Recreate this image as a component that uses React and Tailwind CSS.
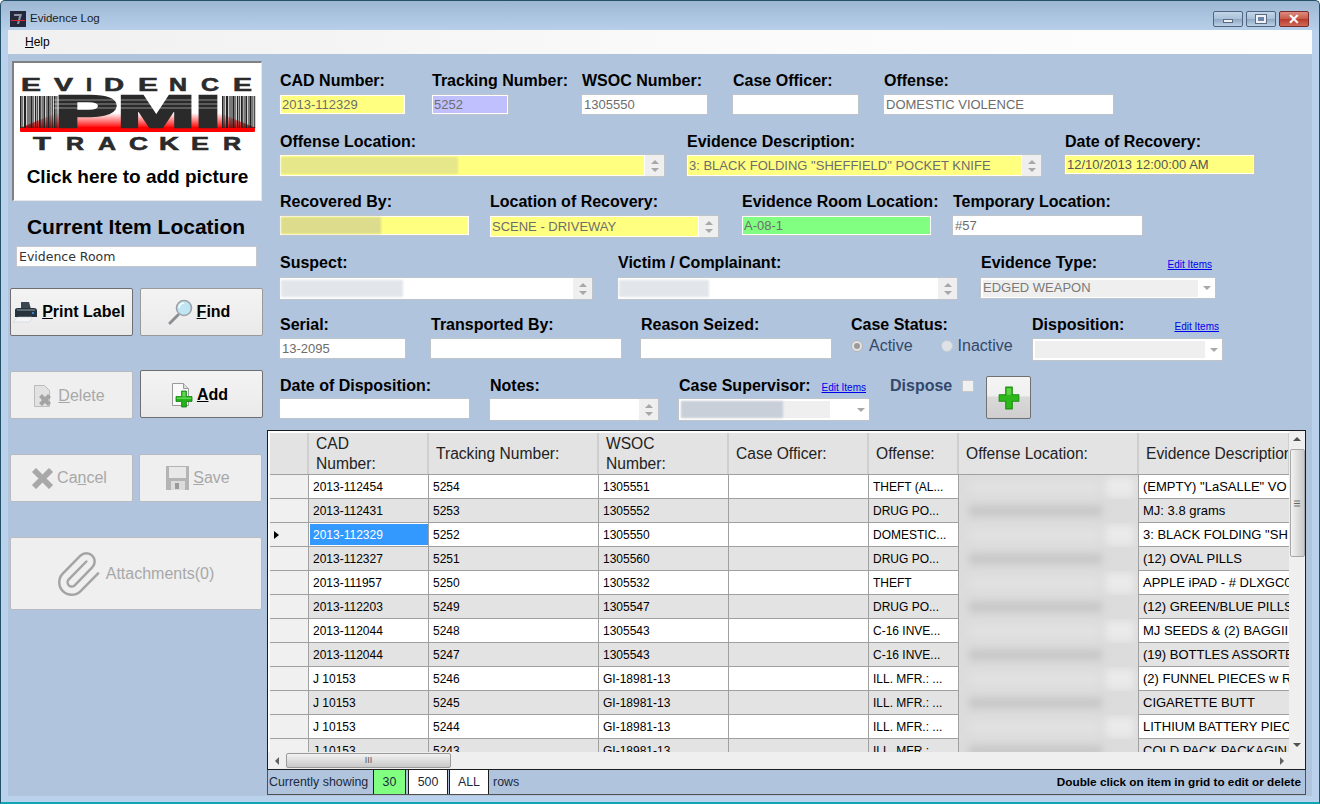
import { Paperclip } from "lucide-react";

const SANS = "font-['Liberation_Sans',Arial,sans-serif]";

const rows = [
  ["2013-112454", "5254", "1305551", "THEFT (AL...", '(EMPTY) "LaSALLE" VO'],
  ["2013-112431", "5253", "1305552", "DRUG PO...", "MJ: 3.8 grams"],
  ["2013-112329", "5252", "1305550", "DOMESTIC...", '3: BLACK FOLDING "SH'],
  ["2013-112327", "5251", "1305560", "DRUG PO...", "(12) OVAL PILLS"],
  ["2013-111957", "5250", "1305532", "THEFT", "APPLE iPAD - # DLXGC0"],
  ["2013-112203", "5249", "1305547", "DRUG PO...", "(12) GREEN/BLUE PILLS"],
  ["2013-112044", "5248", "1305543", "C-16 INVE...", "MJ SEEDS & (2) BAGGII"],
  ["2013-112044", "5247", "1305543", "C-16 INVE...", "(19) BOTTLES ASSORTE"],
  ["J 10153", "5246", "GI-18981-13", "ILL. MFR.: ...", "(2) FUNNEL PIECES w R"],
  ["J 10153", "5245", "GI-18981-13", "ILL. MFR.: ...", "CIGARETTE BUTT"],
  ["J 10153", "5244", "GI-18981-13", "ILL. MFR.: ...", "LITHIUM BATTERY PIEC"],
  ["J 10153", "5243", "GI-18981-13", "ILL. MFR.: ...", "COLD PACK PACKAGIN"],
];

const GRID = "grid grid-cols-[39px_120px_170px_130px_140px_90px_180px_151px]";

function Label({ children, className = "" }) {
  return <div className={`h-[14px] pl-[1px] text-[16px] leading-[14px] font-bold text-black whitespace-nowrap ${className}`}>{children}</div>;
}

function Spinner() {
  return (
    <div className="flex w-[20px] flex-col items-center justify-center gap-[4px] bg-[#efefef] border-l border-white h-full shrink-0">
      <span className="h-0 w-0 border-x-[4px] border-b-[4px] border-x-transparent border-b-[#a8a8a8]" />
      <span className="h-0 w-0 border-x-[4px] border-t-[4px] border-x-transparent border-t-[#a8a8a8]" />
    </div>
  );
}

function Caret() {
  return (
    <div className="flex w-[17px] h-full items-center justify-center shrink-0">
      <span className="h-0 w-0 border-x-[4px] border-t-[4px] border-x-transparent border-t-[#a8a8a8]" />
    </div>
  );
}

function Box({ width, height = "h-[21px]", bg = "bg-white", children, className = "" }) {
  return (
    <div className={`${width} ${height} ${bg} ${className} flex items-center border border-[#bfc4ca] shadow-[inset_0_0_0_1px_#fff] text-[13px] text-[#6d6d6d] whitespace-nowrap overflow-hidden`}>
      {children}
    </div>
  );
}

function Blur({ width, color = "bg-[#e2e5ea]" }) {
  return <div className={`${width} ${color} h-[17px] ml-[1px] blur-[1px]`} />;
}

function Field({ width, label, extra, gap = "mb-[6px]", children }) {
  return (
    <div className={`${width} shrink-0`}>
      <div className={`flex items-baseline justify-between h-[14px] ${gap}`}>
        <Label>{label}</Label>
        {extra}
      </div>
      {children}
    </div>
  );
}

function EditItems({ className = "" }) {
  return <a className={`text-[10px] leading-[14px] text-[#0000ee] underline whitespace-nowrap ${className}`}>Edit Items</a>;
}

function Btn({ width, height = "h-[48px]", enabled, pad = "pr-[5px]", children, className = "" }) {
  const look = enabled
    ? "border-[#6f6f6f] bg-[linear-gradient(#f3f3f3_0%,#efefef_50%,#e9e9e9_100%)] text-black font-bold"
    : "border-[#b8bcc0] bg-[#efefef] text-[#a8a8a8]";
  return (
    <div className={`${width} ${height} ${look} ${pad} ${className} flex items-center justify-center gap-[3px] rounded-[2px] border text-[16px] shrink-0`}>
      {children}
    </div>
  );
}

function PrinterIcon() {
  return (
    <svg width="26" height="26" viewBox="0 0 26 26">
      <path d="M8 3h8l2 7H8z" fill="#3c4650" />
      <path d="M2 11q0-2 3-2h16q3 0 3 3v6H2z" fill="#28323c" />
      <path d="M4 10h18v2H4z" fill="#5a6874" />
      <circle cx="20" cy="14" r="1" fill="#3aa0ff" />
      <path d="M5 18h14l-2 5H0z" fill="#f2f4f6" stroke="#c4c8cc" strokeWidth="0.5" />
    </svg>
  );
}

function MagnifierIcon() {
  return (
    <svg width="26" height="26" viewBox="0 0 26 26">
      <path d="M2 24l8-8" stroke="#8b8f94" strokeWidth="3" strokeLinecap="round" />
      <circle cx="16" cy="9" r="7.5" fill="#bfe6f2" stroke="#9ca3a8" strokeWidth="1.6" />
      <path d="M11 9a5 5 0 0 1 5-5" stroke="#fff" strokeWidth="1.6" fill="none" />
    </svg>
  );
}

function PlusShape({ x = 0, y = 0, scale = 1 }) {
  return (
    <g transform={`translate(${x} ${y}) scale(${scale})`}>
      <path d="M7 0h6v7h7v6h-7v7H7v-7H0V7h7z" fill="#24b41a" stroke="#0f7a0c" strokeWidth="1" strokeLinejoin="round" />
      <path d="M8 1h4v6H8zM1 8h18v2H1z" fill="#7be66e" opacity="0.7" />
    </g>
  );
}

function AddIcon() {
  return (
    <svg width="24" height="26" viewBox="0 0 24 26">
      <path d="M2.500 1.500h11l5 5v17h-16z" fill="#fafafa" stroke="#9a9a9a" />
      <path d="M13.500 1.500v5h5" fill="#dcdcdc" stroke="#9a9a9a" />
      <PlusShape x={6} y={9} scale={0.8} />
    </svg>
  );
}

function DeleteIcon() {
  return (
    <svg width="22" height="26" viewBox="0 0 22 26">
      <path d="M1.500 2.500h10l5 5v16h-15z" fill="#e2e2e2" stroke="#bcbcbc" />
      <path d="M6 14l3-3 3 3 3-3 3 3-3 3 3 3-3 3-3-3-3 3-3-3 3-3z" fill="#a4a4a4" />
    </svg>
  );
}

function CancelIcon() {
  return (
    <svg width="23" height="23" viewBox="0 0 23 23">
      <path d="M1 5l4-4 6.500 6.500L18 1l4 4-6.500 6.500L22 18l-4 4-6.500-6.500L5 22l-4-4 6.500-6.500z" fill="#a8a8a8" stroke="#c4c4c4" strokeWidth="0.6" />
    </svg>
  );
}

function SaveIcon() {
  return (
    <svg width="24" height="24" viewBox="0 0 24 24">
      <path d="M0 0h23v24H0z" fill="#b4b4b4" />
      <path d="M3 1h17v11H3z" fill="#e8e8e8" />
      <path d="M5 15h14v9H5z" fill="#dcdcdc" />
      <path d="M9 17h4v6H9z" fill="#9a9a9a" />
    </svg>
  );
}

function AppIcon() {
  return (
    <svg width="16" height="16" viewBox="0 0 16 16">
      <path d="M0 0h16v16H0z" fill="#23283a" />
      <path d="M4 3h8l-3 10H7l2-8H4z" fill="#8f96a8" />
      <path d="M1 9h14v1H1z" fill="#d8262c" />
    </svg>
  );
}

const heavy = "'Liberation Sans', Arial, sans-serif";

function LogoLetter({ ch, x, w, y }) {
  return (
    <text x={x} y={y} fontFamily={heavy} fontSize="18" fontWeight="700" fill="#2b2b2b" stroke="#2b2b2b" strokeWidth="0.6" textLength={w} lengthAdjust="spacingAndGlyphs">
      {ch}
    </text>
  );
}

function Barcode({ x }) {
  const widths = [1.6, 0.8, 2, 0.8, 1.2, 2.2, 0.8, 1.4, 0.8, 2, 1, 1.6, 0.8, 2.2, 1, 0.8, 1.8, 1];
  let pos = x;
  return widths.map((w, i) => {
    const bar = <rect key={i} x={pos} y="19" width={w} height="32" fill="#222" />;
    pos += w + 0.8;
    return bar;
  });
}

function Logo() {
  const top = [["E", 1, 20], ["V", 34, 19], ["I", 66, 6], ["D", 84, 20], ["E", 118, 20], ["N", 149, 18], ["C", 181, 18], ["E", 213, 19]];
  const bottom = [["T", 13, 18], ["R", 46, 18], ["A", 78, 18], ["C", 109, 19], ["K", 139, 20], ["E", 171, 18], ["R", 203, 18]];
  return (
    <svg width="236" height="76" viewBox="0 0 236 76" className="shrink-0">
      <defs>
        <linearGradient id="redFade" x1="0" y1="0" x2="0" y2="1">
          <stop offset="0" stopColor="#ff0000" stopOpacity="0" />
          <stop offset="1" stopColor="#ff0000" />
        </linearGradient>
      </defs>
      {top.map(([ch, x, w], i) => (
        <LogoLetter key={i} ch={ch} x={x} w={w} y="14" />
      ))}
      <path d="M0 51L36 36h164l36 15z" fill="url(#redFade)" />
      <path d="M0 50h235v4q0 1-1 1H1q-1 0-1-1z" fill="#ff0000" />
      <Barcode x={0} />
      <Barcode x={202} />
      <text x="35" y="50" fontFamily={heavy} fontSize="44" fontWeight="700" fill="#2a2a2a" stroke="#2a2a2a" strokeWidth="2.5" textLength="166" lengthAdjust="spacingAndGlyphs">PMI</text>
      <path d="M34 23h167M34 27h167M34 31h167" stroke="#ffffff" strokeWidth="0.6" opacity="0.8" />
      {bottom.map(([ch, x, w], i) => (
        <LogoLetter key={i} ch={ch} x={x} w={w} y="73" />
      ))}
    </svg>
  );
}

function LeftPanel() {
  return (
    <div className="w-[259px] shrink-0 pt-[7px] flex flex-col">
      <div className="ml-[4px] w-[250px] h-[140px] bg-white border-t-2 border-l-2 border-[#808080] flex flex-col items-center pt-[14px] border-r border-b border-r-[#e8e8e8] border-b-[#e8e8e8]">
        <Logo />
        <div className="mt-[13px] text-[19px] leading-[22px] font-bold text-black whitespace-nowrap">Click here to add picture</div>
      </div>
      <div className="mt-[15px] ml-[3px] w-[250px] text-center text-[21px] leading-[22px] font-bold text-black whitespace-nowrap">Current Item Location</div>
      <div className="mt-[8px] ml-[8px] w-[241px] h-[21px] bg-white border border-[#c4c8cc] flex items-center pl-[2px] pt-[1px] text-[12.500px] text-[#333] font-['DejaVu_Sans',sans-serif]">Evidence Room</div>

      <div className="mt-[21px] ml-[2px] flex gap-[7px]">
        <Btn width="w-[123px]" enabled>
          <PrinterIcon />
          <span><u>P</u>rint Label</span>
        </Btn>
        <Btn width="w-[123px]" enabled className="border-[#9a9a9a]">
          <MagnifierIcon />
          <span><u>F</u>ind</span>
        </Btn>
      </div>
      <div className="mt-[34px] ml-[2px] flex gap-[7px] items-start">
        <Btn width="w-[123px]" className="mt-[1px] pt-[1px]">
          <DeleteIcon />
          <span><u>D</u>elete</span>
        </Btn>
        <Btn width="w-[123px]" enabled className="pt-[1px]">
          <AddIcon />
          <span><u>A</u>dd</span>
        </Btn>
      </div>
      <div className="mt-[35px] ml-[2px] flex gap-[6px]">
        <Btn width="w-[123px]">
          <CancelIcon />
          <span>Ca<u>n</u>cel</span>
        </Btn>
        <Btn width="w-[123px]">
          <SaveIcon />
          <span><u>S</u>ave</span>
        </Btn>
      </div>
      <Btn width="w-[252px]" height="h-[73px]" className="mt-[35px] ml-[2px]">
        <Paperclip size={50} strokeWidth={1.2} className="text-[#a4a4a4]" />
        <span>Attachments(0)</span>
      </Btn>
    </div>
  );
}

function Form() {
  return (
    <div className="pl-[12px] pt-[20px] flex flex-col">
      <div className="flex h-[41px]">
        <Field width="w-[152px]" label="CAD Number:">
          <Box width="w-[127px]" bg="bg-[#ffff80]" className="pl-[2px]">2013-112329</Box>
        </Field>
        <Field width="w-[150px]" label="Tracking Number:">
          <Box width="w-[78px]" bg="bg-[#c0c0ff]" className="pl-[2px]">5252</Box>
        </Field>
        <Field width="w-[151px]" label="WSOC Number:">
          <Box width="w-[127px]" className="pl-[2px]">1305550</Box>
        </Field>
        <Field width="w-[151px]" label="Case Officer:">
          <Box width="w-[127px]" />
        </Field>
        <Field width="w-[231px]" label="Offense:">
          <Box width="w-[231px]" className="pl-[2px]">DOMESTIC VIOLENCE</Box>
        </Field>
      </div>

      <div className="flex mt-[20px] h-[42px]">
        <Field width="w-[407px]" label="Offense Location:" gap="mb-[5px]">
          <Box width="w-[386px]" height="h-[23px]" bg="bg-[#ffff80]" className="justify-between">
            <Blur width="w-[177px]" color="bg-[#e6e68a]" />
            <Spinner />
          </Box>
        </Field>
        <Field width="w-[378px]" label="Evidence Description:" gap="mb-[5px]">
          <Box width="w-[356px]" height="h-[23px]" bg="bg-[#ffff80]" className="justify-between pl-[2px]">
            <span>3: BLACK FOLDING "SHEFFIELD" POCKET KNIFE</span>
            <Spinner />
          </Box>
        </Field>
        <Field width="w-[191px]" label="Date of Recovery:" gap="mb-[5px]">
          <Box width="w-[191px]" bg="bg-[#ffff80]" className="pl-[2px] text-[#555]">12/10/2013 12:00:00 AM</Box>
        </Field>
      </div>

      <div className="flex mt-[18px] h-[43px]">
        <Field width="w-[210px]" label="Recovered By:">
          <Box width="w-[191px]" bg="bg-[#ffff80]">
            <Blur width="w-[100px]" color="bg-[#dcdc8c]" />
          </Box>
        </Field>
        <Field width="w-[252px]" label="Location of Recovery:">
          <Box width="w-[230px]" height="h-[23px]" bg="bg-[#ffff80]" className="justify-between pl-[2px]">
            <span>SCENE - DRIVEWAY</span>
            <Spinner />
          </Box>
        </Field>
        <Field width="w-[211px]" label="Evidence Room Location:">
          <Box width="w-[191px]" bg="bg-[#80ff80]" className="pl-[2px]">A-08-1</Box>
        </Field>
        <Field width="w-[191px]" label="Temporary Location:">
          <Box width="w-[191px]" className="pl-[2px]">#57</Box>
        </Field>
      </div>

      <div className="flex mt-[18px] h-[44px]">
        <Field width="w-[338px]" label="Suspect:" gap="mb-[7px]">
          <Box width="w-[314px]" height="h-[23px]" className="justify-between">
            <Blur width="w-[122px]" />
            <Spinner />
          </Box>
        </Field>
        <Field width="w-[363px]" label="Victim / Complainant:" gap="mb-[7px]">
          <Box width="w-[341px]" height="h-[23px]" className="justify-between">
            <Blur width="w-[90px]" />
            <Spinner />
          </Box>
        </Field>
        <Field width="w-[232px]" label="Evidence Type:" gap="mb-[7px]" extra={<EditItems />}>
          <Box width="w-[236px]" height="h-[22px]" className="justify-between pl-[2px] text-[#7a7a7a]">
            <span className="flex items-center h-[17px] w-[215px] bg-[#efefef]">EDGED WEAPON</span>
            <Caret />
          </Box>
        </Field>
      </div>

      <div className="flex mt-[18px] h-[43px]">
        <Field width="w-[151px]" label="Serial:">
          <Box width="w-[127px]" className="pl-[2px]">13-2095</Box>
        </Field>
        <Field width="w-[210px]" label="Transported By:">
          <Box width="w-[192px]" />
        </Field>
        <Field width="w-[210px]" label="Reason Seized:">
          <Box width="w-[192px]" />
        </Field>
        <div className="w-[181px] shrink-0">
          <Label className="mb-[6px]">Case Status:</Label>
          <div className="flex items-center h-[16px] pl-[1px] text-[16px] text-[#34486a]">
            <span className="w-[12px] h-[12px] rounded-full bg-[#e4e4e4] border border-[#b4b4b4] flex items-center justify-center">
              <span className="w-[6px] h-[6px] rounded-full bg-[#9a9a9a]" />
            </span>
            <span className="ml-[6px]">Active</span>
            <span className="ml-[28px] w-[12px] h-[12px] rounded-full bg-[#dfe3e8] border border-[#c8ccd0]" />
            <span className="ml-[5px]">Inactive</span>
          </div>
        </div>
        <Field width="w-[188px]" label="Disposition:" extra={<EditItems />}>
          <Box width="w-[191px]" height="h-[23px]" className="justify-between pl-[2px] ml-[1px]">
            <span className="h-[17px] w-[170px] bg-[#efefef]" />
            <Caret />
          </Box>
        </Field>
      </div>

      <div className="flex mt-[18px] h-[42px]">
        <Field width="w-[210px]" label="Date of Disposition:" gap="mb-[5px]">
          <Box width="w-[191px]" />
        </Field>
        <Field width="w-[189px]" label="Notes:" gap="mb-[5px]">
          <Box width="w-[170px]" height="h-[23px]" className="justify-end">
            <Spinner />
          </Box>
        </Field>
        <Field width="w-[192px]" label="Case Supervisor:" gap="mb-[5px]" extra={<EditItems className="mr-[4px]" />}>
          <Box width="w-[192px]" height="h-[23px]" className="justify-between pl-[2px]">
            <span className="h-[17px] w-[149px] bg-[#efefef]">
              <span className="block h-[17px] w-[102px] bg-[#c9cfd8] blur-[1px]" />
            </span>
            <Caret />
          </Box>
        </Field>
        <div className="ml-[20px] flex items-center h-[14px] gap-[10px] shrink-0">
          <span className="text-[16px] font-bold text-[#34486a]">Dispose</span>
          <span className="w-[12px] h-[12px] bg-[#f0f0f0] border border-[#c4c8cc]" />
        </div>
        <div className="ml-[12px] -mt-[3px] w-[45px] h-[43px] rounded-[2px] border border-[#707070] bg-[linear-gradient(#f4f4f4_0%,#f0f0f0_45%,#d9d9d9_50%,#cfcfcf_100%)] flex items-center justify-center shrink-0">
          <svg width="22" height="24" viewBox="0 0 20 22">
            <path d="M7 1h6v7h6v6h-6v7H7v-7H1V8h6z" fill="#2cb81a" stroke="#1f8f12" strokeLinejoin="round" />
            <path d="M8 2h4v6H8z" fill="#72df5d" opacity="0.7" />
          </svg>
        </div>
      </div>
    </div>
  );
}

function HeaderCell({ children, className = "" }) {
  return (
    <div className={`h-[41px] bg-[#e3e3e3] border-r-2 border-[#cfcfcf] flex items-center pl-[7px] text-[15.600px] leading-[20px] text-[#222] whitespace-nowrap overflow-hidden ${className}`}>
      {children}
    </div>
  );
}

function LocationBlur({ index }) {
  const band = index % 2 === 0 ? "bg-[#e2e2e2]" : "bg-[#c4c4c4]";
  return (
    <>
      <div className={`${band} absolute left-[10px] right-[36px] top-[7px] h-[10px] blur-[4px]`} />
      {index % 2 === 0 && <div className="absolute right-[4px] top-[2px] w-[28px] h-[20px] bg-[#ebebeb] blur-[5px]" />}
    </>
  );
}

function DataRow({ row, index }) {
  const selected = index === 2;
  const bg = index % 2 === 0 ? "bg-white" : "bg-[#e3e3e3]";
  const cell = `${bg} h-[24px] border-r border-b border-[#a0a0a0] flex items-center pl-[4px] pt-[1px] overflow-hidden whitespace-nowrap`;
  return (
    <div className={`${GRID} text-[12px] text-black`}>
      <div className="h-[24px] bg-[#f0f0f0] border-r border-b border-[#a0a0a0] flex items-center pl-[4px]">
        {selected && <span className="h-0 w-0 border-y-[4px] border-l-[5px] border-y-transparent border-l-black" />}
      </div>
      {selected ? (
        <div className="h-[24px] bg-white border-r border-b border-[#a0a0a0] pl-[1px] pt-[1px]">
          <div className="h-[21px] bg-[#3399ff] text-white flex items-center pl-[3px]">{row[0]}</div>
        </div>
      ) : (
        <div className={cell}>{row[0]}</div>
      )}
      <div className={cell}>{row[1]}</div>
      <div className={cell}>{row[2]}</div>
      <div className={cell} />
      <div className={cell}>{row[3]}</div>
      <div className="h-[24px] bg-[#dcdcdc] border-r border-[#a0a0a0] relative overflow-hidden">
        <LocationBlur index={index} />
      </div>
      <div className={`${cell} text-[13px]`}>{row[4]}</div>
    </div>
  );
}

function Grid() {
  return (
    <div className="mt-[9px] w-[1039px] border border-[#1c1c1c] bg-white">
      <div className="flex h-[338px]">
        <div className="w-[1021px] pt-[2px] flex flex-col overflow-hidden">
          <div className="h-[319px] pl-[2px] overflow-hidden">
            <div className={`${GRID} border-b border-[#a0a0a0]`}>
              <HeaderCell />
              <HeaderCell>
                <span>CAD<br />Number:</span>
              </HeaderCell>
              <HeaderCell>Tracking Number:</HeaderCell>
              <HeaderCell>
                <span>WSOC<br />Number:</span>
              </HeaderCell>
              <HeaderCell>Case Officer:</HeaderCell>
              <HeaderCell>Offense:</HeaderCell>
              <HeaderCell>Offense Location:</HeaderCell>
              <HeaderCell className="border-r-0">Evidence Description:</HeaderCell>
            </div>
            {rows.map((row, i) => (
              <DataRow key={i} row={row} index={i} />
            ))}
          </div>
          <div className="h-[17px] bg-[#efefef] flex items-center">
            <span className="ml-[7px] h-0 w-0 border-y-[4px] border-r-[4px] border-y-transparent border-r-[#606060]" />
            <div className="ml-[7px] w-[165px] h-[15px] rounded-[2px] border border-[#9a9a9a] bg-[linear-gradient(#f2f2f2,#c9c9c9)] flex items-center justify-center">
              <span className="text-[9px] leading-none text-[#555]">III</span>
            </div>
            <span className="ml-auto mr-[5px] h-0 w-0 border-y-[4px] border-l-[4px] border-y-transparent border-l-[#606060]" />
          </div>
        </div>
        <div className="w-[16px] bg-[#efefef] flex flex-col items-center pt-[6px]">
          <span className="h-0 w-0 border-x-[4px] border-b-[4px] border-x-transparent border-b-[#505050]" />
          <div className="mt-[8px] w-[15px] h-[108px] rounded-[2px] border border-[#a8a8a8] bg-[linear-gradient(90deg,#f2f2f2,#c9c9c9)] flex items-center justify-center">
            <span className="text-[9px] leading-none text-[#555] rotate-90">III</span>
          </div>
          <span className="mt-[186px] h-0 w-0 border-x-[4px] border-t-[4px] border-x-transparent border-t-[#505050]" />
        </div>
      </div>
    </div>
  );
}

function Footer() {
  return (
    <div className="w-[1039px] h-[25px] border border-t-0 border-[#505050] flex items-center text-[12.400px] text-[#1c2a3c] whitespace-nowrap">
      <span className="pl-[1px] w-[105px]">Currently showing</span>
      <span className="w-[33px] h-full flex items-center justify-center bg-[#80ff80] border-x border-[#1c1c1c]">30</span>
      <span className="ml-[2px] w-[40px] h-full flex items-center justify-center bg-white border-x border-[#1c1c1c]">500</span>
      <span className="ml-[1px] w-[40px] h-full flex items-center justify-center bg-white border-x border-[#1c1c1c]">ALL</span>
      <span className="ml-[4px]">rows</span>
      <span className="ml-auto pr-[4px] text-[11.750px] font-bold text-black">Double click on item in grid to edit or delete</span>
    </div>
  );
}

function WinButton({ width, className, children }) {
  return (
    <div className={`${width} ${className} h-[16px] flex items-center justify-center rounded-[2px] border border-[#4e6480]`}>
      {children}
    </div>
  );
}

export default function App() {
  return (
    <div className={`${SANS} w-[1320px] h-[804px] overflow-hidden flex flex-col border-t border-x border-b-2 border-[#24506a] border-b-[#12a6b4] rounded-t-[5px] bg-[linear-gradient(#9db7d3_0%,#bad2ec_4%,#bad2ec_100%)]`}>
      <div className="h-[29px] flex items-start shrink-0 px-[9px]">
        <div className="mt-[9px] flex items-center gap-[4px]">
          <AppIcon />
          <span className="text-[11.500px] text-[#1c1c1c]">Evidence Log</span>
        </div>
        <div className="ml-auto mt-[10px] mr-[1px] flex gap-[3px]">
          <WinButton width="w-[30px]" className="bg-[linear-gradient(#c4d6e8_0%,#a8c0d8_50%,#8da8c4_51%,#bcd0e4_100%)]">
            <span className="mt-[4px] w-[10px] h-[4px] bg-[#eef1f5] border border-[#5a6a80]" />
          </WinButton>
          <WinButton width="w-[30px]" className="bg-[linear-gradient(#c4d6e8_0%,#a8c0d8_50%,#8da8c4_51%,#bcd0e4_100%)]">
            <span className="w-[10px] h-[8px] border-2 border-[#eef1f5] outline outline-1 outline-[#5a6a80] bg-[#6d86a6]" />
          </WinButton>
          <WinButton width="w-[30px]" className="border-[#7a2a2a] bg-[linear-gradient(#dd8b80_0%,#c75a4a_50%,#b83a2c_51%,#d06a58_100%)]">
            <span className="text-[14px] leading-none font-bold text-white">✕</span>
          </WinButton>
        </div>
      </div>
      <div className="mx-[7px] h-[24px] shrink-0 bg-[linear-gradient(90deg,#f0f0f0_0%,#fbfbfb_60%,#fdfdfd_100%)] flex items-center pl-[17px] text-[12px] text-black">
        <span><u>H</u>elp</span>
      </div>
      <div className="mx-[7px] h-[742px] bg-[#b0c4de] flex">
        <LeftPanel />
        <div className="flex flex-col flex-1 min-w-0">
          <Form />
          <Grid />
          <Footer />
        </div>
      </div>
    </div>
  );
}
